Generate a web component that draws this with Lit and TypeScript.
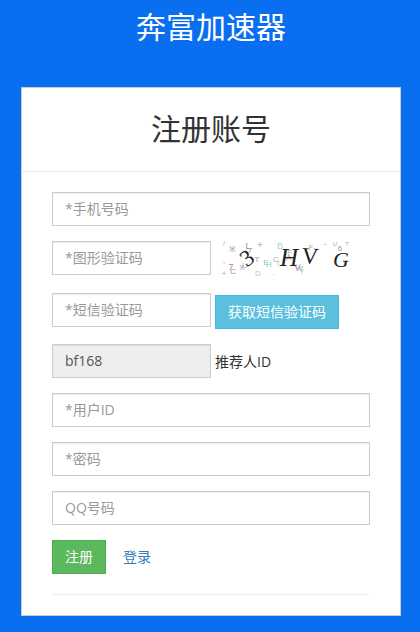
import { LitElement, html, css, svg } from "lit";
import { customElement } from "lit/decorators.js";

/* centre x, centre y, glyph, colour, size (page coordinates) */
const noise: [number, number, string, string, number][] = [
  [224, 244, "/", "#9db8cc", 7],
  [232, 249, "※", "#8a8a80", 8],
  [248, 246, "L", "#c47a80", 9],
  [250, 250, "7", "#a08f8f", 8],
  [260, 245, "+", "#7f9fbc", 9],
  [280, 246, "B", "#a7d4c4", 9],
  [290, 252, "F", "#a8b89a", 8],
  [311, 247, "F", "#b0b590", 8],
  [325, 244, "~", "#8fb6c8", 6],
  [335, 244, "U", "#a99ab8", 6],
  [340, 248, "6", "#a88fa8", 8],
  [347, 244, "T", "#c0a0a0", 6],
  [224, 265, "'", "#b5bf90", 9],
  [231, 267, "7", "#c47a80", 9],
  [233, 271, "C", "#9a88a8", 8],
  [242, 267, "X", "#9a9aa0", 8],
  [245, 265, "U", "#a0b4d0", 8],
  [257, 259, "T", "#9aa0a0", 8],
  [266, 262, "E", "#90c8c8", 8],
  [269, 264, "H", "#9ac8d0", 8],
  [276, 259, "C", "#a8b8a0", 8],
  [278, 264, "T", "#a0c8c0", 7],
  [289, 257, "A", "#c09090", 8],
  [298, 266, "U", "#a8a8a0", 8],
  [299, 268, "W", "#a090b8", 8],
  [302, 272, "Y", "#b0c0a0", 7],
  [224, 274, "+", "#8fa8b8", 7],
  [258, 273, "D", "#c0cc90", 8],
  [273, 274, "··", "#9a9ab0", 6],
];

/* centre x, centre y, glyph, size, rotation, style */
const big: [number, number, string, number, number, string][] = [
  [247, 258, "3", 23, -36, "normal"],
  [289, 258, "H", 25, 0, "italic"],
  [310, 256, "V", 23, 4, "normal"],
  [341, 260, "G", 22, 0, "italic"],
];

@customElement("app-root")
export class AppRoot extends LitElement {
  static styles = css`
    :host {
      display: block;
      width: 420px;
      height: 632px;
      overflow: hidden;
      box-sizing: border-box;
      background: #0a6ef0;
      padding: 0 19px 0 21px;
      font-family: "Open Sans", "Noto Sans CJK SC", sans-serif;
      color: #333;
    }
    * {
      box-sizing: border-box;
    }
    h1 {
      margin: 0;
      height: 87px;
      padding-top: 5px;
      font-size: 30px;
      font-weight: 400;
      line-height: 44px;
      color: #fff;
      text-align: center;
    }
    .card {
      width: 380px;
      height: 529px;
      background: #fff;
      border: 1px solid #ccc;
    }
    .head {
      height: 84px;
      border-bottom: 1px solid #eee;
      text-align: center;
    }
    h2 {
      margin: 0;
      padding-top: 19px;
      font-size: 30px;
      font-weight: 400;
      line-height: 44px;
      color: #333;
    }
    form {
      display: flex;
      flex-direction: column;
      padding: 20px 30px 0;
      gap: 15px;
    }
    .row {
      display: flex;
      align-items: flex-start;
      gap: 4px;
    }
    .sms {
      height: 36px;
    }
    .referrer {
      align-items: center;
    }
    input {
      display: block;
      width: 318px;
      height: 34px;
      padding: 5px 12px 7px;
      border: 1px solid #ccc;
      border-radius: 0;
      background: #fff;
      font: inherit;
      font-size: 14px;
      line-height: 20px;
      color: #555;
      box-shadow: inset 0 1px 1px rgba(0, 0, 0, 0.075);
      outline: none;
    }
    input::placeholder {
      color: #999;
      opacity: 1;
    }
    input.short {
      width: 159px;
    }
    input[readonly] {
      background: #eee;
    }
    .captcha {
      display: block;
      width: 136px;
      height: 37px;
    }
    .captcha-row {
      height: 37px;
    }
    .btn {
      display: block;
      height: 34px;
      padding: 6px 12px;
      border: 1px solid transparent;
      font: inherit;
      font-size: 14px;
      line-height: 20px;
      color: #fff;
    }
    .sms .btn {
      width: 124px;
      margin-top: 2px;
      padding: 6px 0;
      background: #5bc0de;
      border-color: #46b8da;
    }
    .label {
      font-size: 14px;
      line-height: 20px;
      color: #333;
      margin-top: 1px;
    }
    .actions {
      display: flex;
      align-items: center;
      gap: 17px;
    }
    .submit {
      width: 54px;
      background: #5cb85c;
      border-color: #4cae4c;
    }
    a {
      font-size: 14px;
      line-height: 20px;
      color: #337ab7;
      text-decoration: none;
    }
    hr {
      width: 100%;
      margin: 5px 0 0;
      border: 0;
      border-top: 1px solid #eee;
    }
  `;

  render() {
    return html`
      <h1>奔富加速器</h1>
      <div class="card">
        <div class="head"><h2>注册账号</h2></div>
        <form>
          <input placeholder="*手机号码" />
          <div class="row captcha-row">
            <input class="short" placeholder="*图形验证码" />
            <svg class="captcha" viewBox="215 241 136 37" aria-label="captcha">
              ${noise.map(
                ([x, y, t, c, s]) =>
                  svg`<text x=${x} y=${y + s * 0.35} text-anchor="middle" fill=${c} font-size=${s} font-family="Liberation Sans, sans-serif">${t}</text>`
              )}
              ${big.map(
                ([x, y, t, s, r, st]) =>
                  svg`<text x=${x} y=${y + s * 0.33} text-anchor="middle" fill="#222" font-size=${s} font-style=${st} font-family="Liberation Serif, serif" transform="rotate(${r} ${x} ${y})">${t}</text>`
              )}
            </svg>
          </div>
          <div class="row sms">
            <input class="short" placeholder="*短信验证码" />
            <button type="button" class="btn">获取短信验证码</button>
          </div>
          <div class="row referrer">
            <input class="short" readonly value="bf168" />
            <span class="label">推荐人ID</span>
          </div>
          <input placeholder="*用户ID" />
          <input placeholder="*密码" />
          <input placeholder="QQ号码" />
          <div class="actions">
            <button type="button" class="btn submit">注册</button>
            <a href="#">登录</a>
          </div>
          <hr />
        </form>
      </div>
    `;
  }
}
